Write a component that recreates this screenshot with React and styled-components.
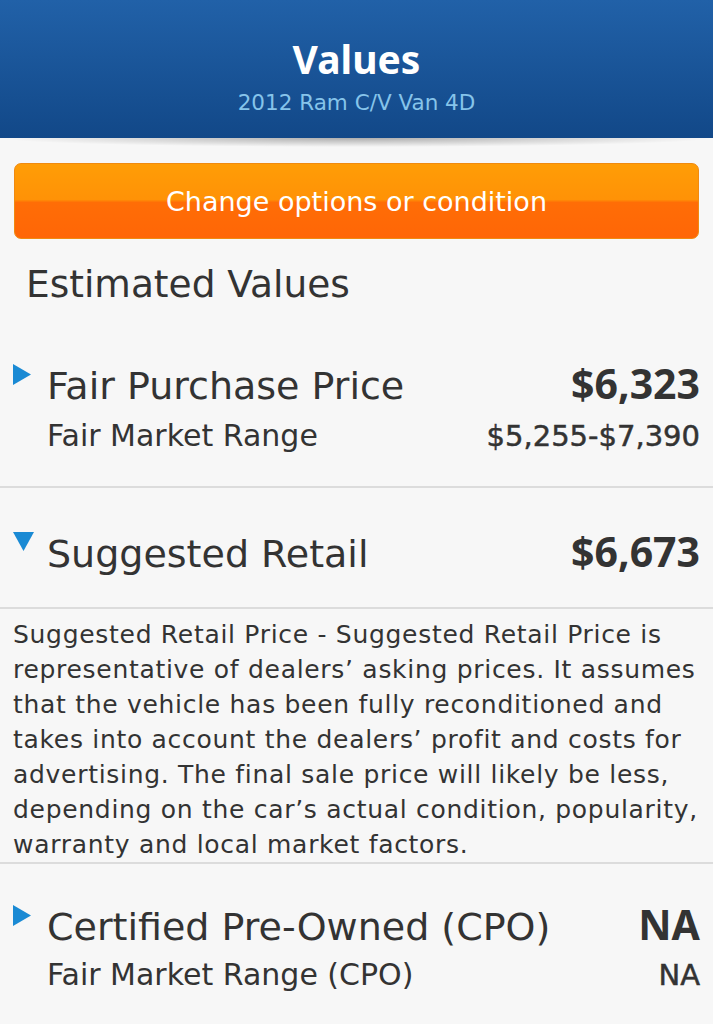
import React from 'react'
import styled, { createGlobalStyle } from 'styled-components'

const GlobalStyle = createGlobalStyle`
  html, body {
    margin:0;
    padding:0;
    background:#f7f7f7;
  }
  body {
    font-family:"DejaVu Sans", "Noto Sans", sans-serif;
    color:#333;
  }
`

const rows = [
  { name: 'Fair Purchase Price', value: '$6,323', subName: 'Fair Market Range', subValue: '$5,255-$7,390', open: false },
  {
    name: 'Suggested Retail',
    value: '$6,673',
    open: true,
    text: 'Suggested Retail Price - Suggested Retail Price is representative of dealers’ asking prices. It assumes that the vehicle has been fully reconditioned and takes into account the dealers’ profit and costs for advertising. The final sale price will likely be less, depending on the car’s actual condition, popularity, warranty and local market factors.',
  },
  { name: 'Certified Pre-Owned (CPO)', value: 'NA', subName: 'Fair Market Range (CPO)', subValue: 'NA', open: false },
]

const Arrow = ({ open }) => (
  <ArrowBox>
    {open ? (
      <svg width="21" height="19" viewBox="0 0 21 19">
        <polygon points="0,0 21,0 10.5,19" fill="#1a8ad4" />
      </svg>
    ) : (
      <svg width="18" height="21" viewBox="0 0 18 21">
        <polygon points="0,0 18,10.5 0,21" fill="#1a8ad4" />
      </svg>
    )}
  </ArrowBox>
)

const App = () => {
  return (
    <Page>
      <GlobalStyle />
      <Header>
        <Title>Values</Title>
        <Subtitle>2012 Ram C/V Van 4D</Subtitle>
      </Header>
      <Shadow />
      <ButtonWrap>
        <OrangeButton>Change options or condition</OrangeButton>
      </ButtonWrap>
      <SectionTitle>Estimated Values</SectionTitle>
      {rows.map((row, index) => (
        <Section key={index} $last={index === rows.length - 1}>
          <ValueRow $open={row.open} $first={index === 0}>
            <Arrow open={row.open} />
            <RowBody>
              <MainLine>
                <MainName>{row.name}</MainName>
                <MainValue>{row.value}</MainValue>
              </MainLine>
              {row.subName && (
                <SubLine $first={index === 0}>
                  <SubName>{row.subName}</SubName>
                  <SubValue>{row.subValue}</SubValue>
                </SubLine>
              )}
            </RowBody>
          </ValueRow>
          {row.text && <Description>{row.text}</Description>}
        </Section>
      ))}
    </Page>
  )
}

export default App

const Page = styled.div`
  width:713px;
  min-height:1024px;
  background:#f7f7f7;
  overflow:hidden;
`

const Header = styled.header`
  height:138px;
  box-sizing:border-box;
  padding-top:35px;
  background:linear-gradient(#2161a8, #124888);
  display:flex;
  flex-direction:column;
  align-items:center;
`

const Title = styled.h1`
  margin:0;
  font-family:"Noto Sans", "DejaVu Sans", sans-serif;
  font-size:39px;
  line-height:48px;
  font-weight:700;
  color:#fff;
`

const Subtitle = styled.div`
  margin-top:7px;
  font-size:21.5px;
  line-height:26px;
  color:#86c4ea;
`

const Shadow = styled.div`
  height:9px;
  background:radial-gradient(ellipse 50% 100% at 50% 0%, rgba(0,0,0,0.3), rgba(0,0,0,0) 100%);
`

const ButtonWrap = styled.div`
  padding:16px 14px 0;
`

const OrangeButton = styled.button`
  display:block;
  width:100%;
  height:76px;
  border:1px solid #f08a10;
  border-radius:7px;
  background:linear-gradient(#ff9d06 0%, #ff9206 48%, #ff6d06 52%, #ff6606 100%);
  color:#fff;
  font-family:"DejaVu Sans", "Noto Sans", sans-serif;
  font-size:27px;
  padding:0;
  cursor:pointer;
`

const SectionTitle = styled.h2`
  margin:0;
  padding:18px 26px 0;
  font-size:37.5px;
  line-height:54px;
  font-weight:400;
  color:#333;
`

const Section = styled.section`
  border-bottom:${({ $last }) => ($last ? 'none' : '2px solid #dcdcdc')};
`

const ValueRow = styled.div`
  display:flex;
  align-items:flex-start;
  padding:${({ $open, $first }) => ($open ? '39px 13px 29px' : $first ? '48px 13px 30px' : '36px 13px 30px')};
  border-bottom:${({ $open }) => ($open ? '2px solid #dcdcdc' : 'none')};
`

const ArrowBox = styled.div`
  width:34px;
  flex:none;
  padding-top:5px;
  display:flex;
`

const RowBody = styled.div`
  flex:1;
`

const MainLine = styled.div`
  display:flex;
  justify-content:space-between;
  align-items:baseline;
`

const MainName = styled.span`
  font-size:38px;
  line-height:48px;
`

const MainValue = styled.span`
  font-family:"Noto Sans", "DejaVu Sans", sans-serif;
  font-size:41px;
  line-height:48px;
  font-weight:700;
`

const SubLine = styled.div`
  display:flex;
  justify-content:space-between;
  align-items:baseline;
  margin-top:${({ $first }) => ($first ? '6px' : '4px')};
`

const SubName = styled.span`
  font-size:30px;
  line-height:40px;
`

const SubValue = styled.span`
  font-size:29px;
  line-height:40px;
  font-weight:400;
  -webkit-text-stroke:0.5px #333;
`

const Description = styled.p`
  margin:0;
  padding:8px 8px 0 13px;
  font-size:25px;
  line-height:35px;
  letter-spacing:0.7px;
`
